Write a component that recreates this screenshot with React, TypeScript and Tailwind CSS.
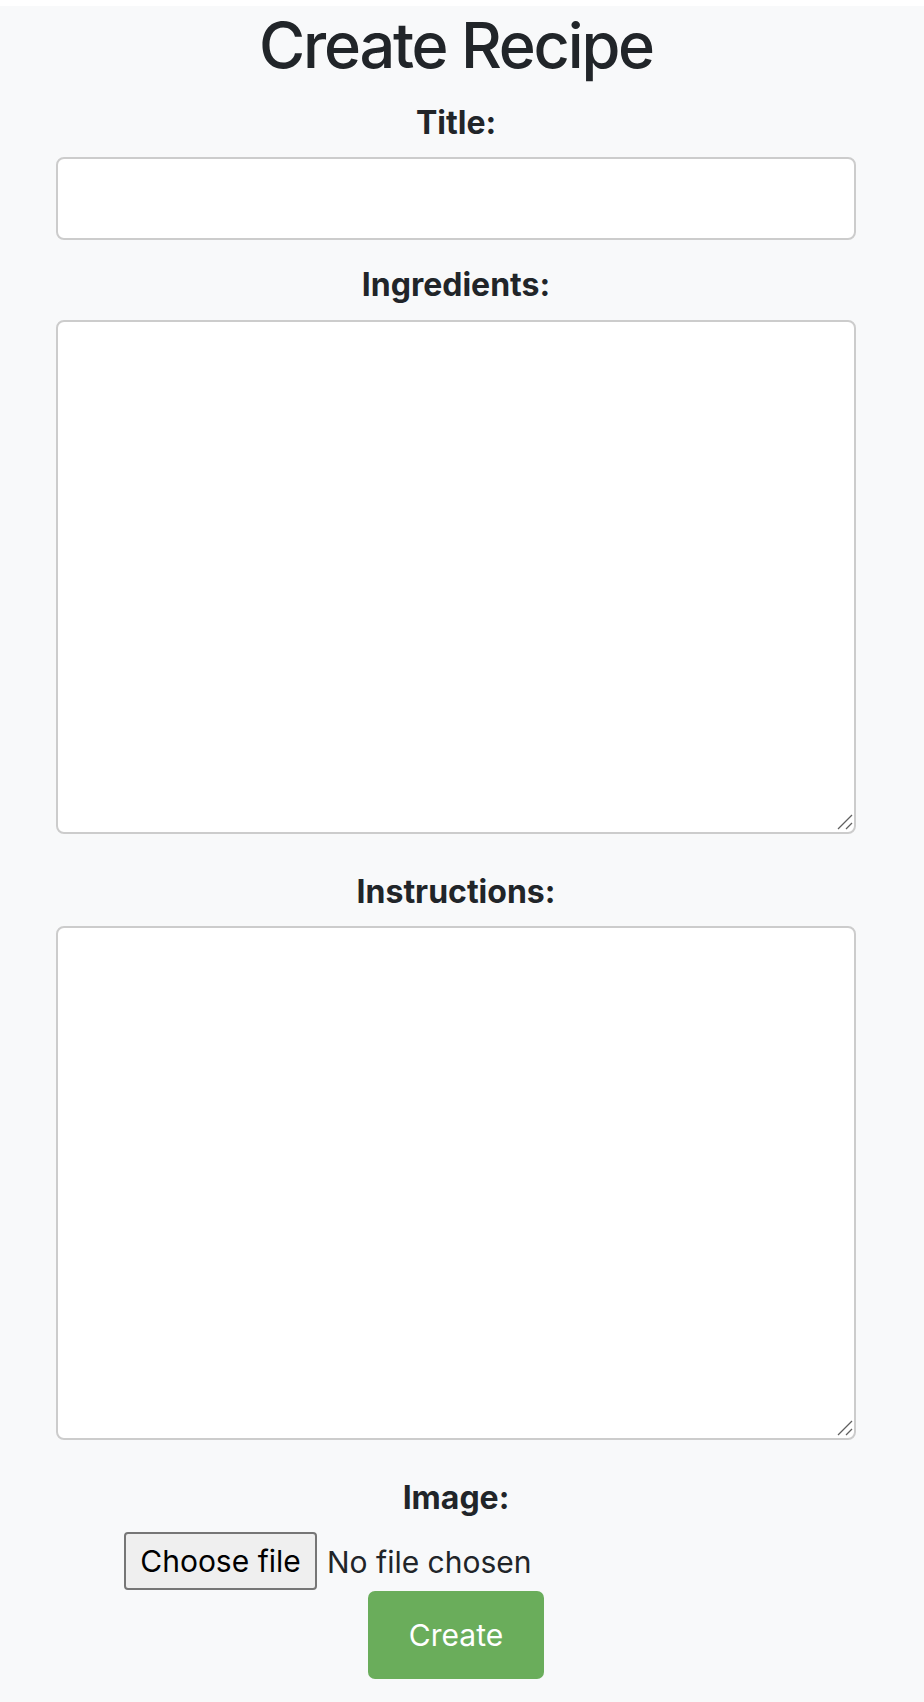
import React from 'react';

const font = { fontFamily: 'Inter, "Noto Sans", "Liberation Sans", sans-serif' };

const ResizeGrip: React.FC = () => (
  <svg
    className="absolute right-[3px] bottom-[4px] pointer-events-none"
    width="16"
    height="16"
    viewBox="0 0 16 16"
    fill="none"
    stroke="#5f5f5f"
    strokeWidth="1.3"
  >
    <line x1="1" y1="15" x2="15" y2="1" />
    <line x1="9" y1="15" x2="15" y2="9" />
  </svg>
);

const App: React.FC = () => {
  return (
    <div className="min-h-screen bg-white pt-[6px]" style={font}>
      <div className="min-h-[1696px] bg-[#f8f9fa]">
        <div className="w-[912px] flex flex-col items-center text-[#212529]">
          <h1 className="mt-[1px] text-[63px] font-medium leading-[77px] tracking-[-0.035em]">Create Recipe</h1>

          <form className="flex flex-col items-center w-full" onSubmit={(e) => e.preventDefault()}>
            {/* Title */}
            <label htmlFor="title" className="mt-[15px] mb-[10px] text-[32px] font-bold leading-[48px]">
              Title:
            </label>
            <input
              id="title"
              type="text"
              className="w-[800px] h-[83px] rounded-[8px] border-2 border-[#cccccc] bg-white px-4 text-[30px] outline-none"
            />

            {/* Ingredients */}
            <label htmlFor="ingredients" className="mt-[21px] mb-[11px] text-[32px] font-bold leading-[48px]">
              Ingredients:
            </label>
            <div className="relative">
              <textarea
                id="ingredients"
                className="block w-[800px] h-[514px] resize-none rounded-[8px] border-2 border-[#cccccc] bg-white p-4 text-[30px] outline-none"
              />
              <ResizeGrip />
            </div>

            {/* Instructions */}
            <label htmlFor="instructions" className="mt-[34px] mb-[10px] text-[32px] font-bold leading-[48px]">
              Instructions:
            </label>
            <div className="relative">
              <textarea
                id="instructions"
                className="block w-[800px] h-[514px] resize-none rounded-[8px] border-2 border-[#cccccc] bg-white p-4 text-[30px] outline-none"
              />
              <ResizeGrip />
            </div>

            {/* Image */}
            <label className="mt-[34px] mb-[10px] text-[32px] font-bold leading-[48px]">Image:</label>
            <div className="w-[664px] flex items-center">
              <label className="w-[193px] h-[58px] flex items-center justify-center rounded-[4px] border-2 border-[#767676] bg-[#efefef] text-[30px] text-black cursor-pointer">
                Choose file
                <input type="file" className="hidden" />
              </label>
              <span className="ml-[10px] pt-[2px] text-[30px] text-[#212529]">No file chosen</span>
            </div>

            <button
              type="submit"
              className="mt-[1px] w-[176px] h-[88px] rounded-[7px] bg-[#6aad5b] text-[30px] text-white"
            >
              Create
            </button>
          </form>
        </div>
      </div>
    </div>
  );
};

export default App;
